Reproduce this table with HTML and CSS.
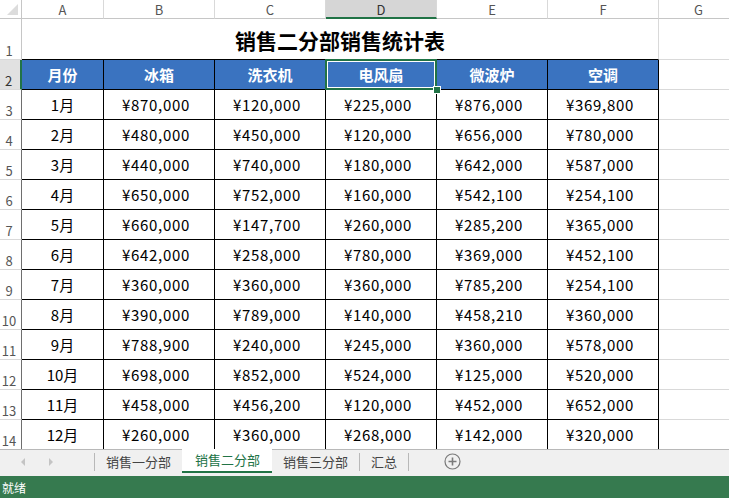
FILE: index.html
```html
<!DOCTYPE html>
<html lang="zh-CN">
<head>
<meta charset="utf-8">
<title>销售二分部销售统计表</title>
<link rel="stylesheet" href="styles.css">
</head>
<body>
<div class="app">
  <div class="sheet">
    <div class="grid">
      <div class="corner"><span class="tri"></span></div>
      <div class="ch">A</div><div class="ch">B</div><div class="ch">C</div><div class="ch sel">D</div><div class="ch">E</div><div class="ch">F</div><div class="ch">G</div>

      <div class="rh">1</div><div class="title">销售二分部销售统计表</div><div class="c"></div>

      <div class="rh edge selr">2</div><div class="c d hd">月份</div><div class="c d hd">冰箱</div><div class="c d hd">洗衣机</div><div class="c d hd active">电风扇</div><div class="c d hd">微波炉</div><div class="c d hd">空调</div><div class="c"></div>

      <div class="rh edge">3</div><div class="c d">1月</div><div class="c d n">¥870,000</div><div class="c d n">¥120,000</div><div class="c d n">¥225,000</div><div class="c d n">¥876,000</div><div class="c d n">¥369,800</div><div class="c"></div>
      <div class="rh edge">4</div><div class="c d">2月</div><div class="c d n">¥480,000</div><div class="c d n">¥450,000</div><div class="c d n">¥120,000</div><div class="c d n">¥656,000</div><div class="c d n">¥780,000</div><div class="c"></div>
      <div class="rh edge">5</div><div class="c d">3月</div><div class="c d n">¥440,000</div><div class="c d n">¥740,000</div><div class="c d n">¥180,000</div><div class="c d n">¥642,000</div><div class="c d n">¥587,000</div><div class="c"></div>
      <div class="rh edge">6</div><div class="c d">4月</div><div class="c d n">¥650,000</div><div class="c d n">¥752,000</div><div class="c d n">¥160,000</div><div class="c d n">¥542,100</div><div class="c d n">¥254,100</div><div class="c"></div>
      <div class="rh edge">7</div><div class="c d">5月</div><div class="c d n">¥660,000</div><div class="c d n">¥147,700</div><div class="c d n">¥260,000</div><div class="c d n">¥285,200</div><div class="c d n">¥365,000</div><div class="c"></div>
      <div class="rh edge">8</div><div class="c d">6月</div><div class="c d n">¥642,000</div><div class="c d n">¥258,000</div><div class="c d n">¥780,000</div><div class="c d n">¥369,000</div><div class="c d n">¥452,100</div><div class="c"></div>
      <div class="rh edge">9</div><div class="c d">7月</div><div class="c d n">¥360,000</div><div class="c d n">¥360,000</div><div class="c d n">¥360,000</div><div class="c d n">¥785,200</div><div class="c d n">¥254,100</div><div class="c"></div>
      <div class="rh edge">10</div><div class="c d">8月</div><div class="c d n">¥390,000</div><div class="c d n">¥789,000</div><div class="c d n">¥140,000</div><div class="c d n">¥458,210</div><div class="c d n">¥360,000</div><div class="c"></div>
      <div class="rh edge">11</div><div class="c d">9月</div><div class="c d n">¥788,900</div><div class="c d n">¥240,000</div><div class="c d n">¥245,000</div><div class="c d n">¥360,000</div><div class="c d n">¥578,000</div><div class="c"></div>
      <div class="rh edge">12</div><div class="c d">10月</div><div class="c d n">¥698,000</div><div class="c d n">¥852,000</div><div class="c d n">¥524,000</div><div class="c d n">¥125,000</div><div class="c d n">¥520,000</div><div class="c"></div>
      <div class="rh edge">13</div><div class="c d">11月</div><div class="c d n">¥458,000</div><div class="c d n">¥456,200</div><div class="c d n">¥120,000</div><div class="c d n">¥452,000</div><div class="c d n">¥652,000</div><div class="c"></div>
      <div class="rh edge">14</div><div class="c d">12月</div><div class="c d n">¥260,000</div><div class="c d n">¥360,000</div><div class="c d n">¥268,000</div><div class="c d n">¥142,000</div><div class="c d n">¥320,000</div><div class="c"></div>
    </div>
  </div>

  <div class="tabbar">
    <div class="nav">
      <svg width="6" height="8" viewBox="0 0 6 8"><path d="M5 0 L1 4 L5 8 Z" fill="#c4c4c4"/></svg>
      <svg width="6" height="8" viewBox="0 0 6 8"><path d="M1 0 L5 4 L1 8 Z" fill="#c4c4c4"/></svg>
    </div>
    <div class="tabs">
      <div class="tab">销售一分部</div>
      <div class="tab current">销售二分部</div>
      <div class="tab">销售三分部</div>
      <div class="tab">汇总</div>
    </div>
    <div class="add">
      <svg width="17" height="17" viewBox="0 0 17 17"><circle cx="8.5" cy="8.5" r="7.5" fill="none" stroke="#7a7a7a" stroke-width="1.2"/><path d="M8.5 4.5 V12.5 M4.5 8.5 H12.5" stroke="#7a7a7a" stroke-width="1.6"/></svg>
    </div>
  </div>

  <div class="status">就绪</div>
</div>
</body>
</html>
```

FILE: styles.css
```css
* { box-sizing: border-box; }
html, body { margin: 0; padding: 0; }
body {
  width: 729px;
  height: 498px;
  overflow: hidden;
  font-family: "Noto Sans CJK SC", "Noto Sans", sans-serif;
  background: #fff;
}
.app { display: flex; flex-direction: column; height: 498px; }

.sheet { height: 449px; overflow: hidden; flex: none; }
.grid {
  display: grid;
  grid-template-columns: 22px 82px 111px 111px 111px 111px 111px 80px;
  grid-template-rows: 19px 41px repeat(13, 30px);
}

.corner {
  position: relative;
  background: #fff;
  border-right: 1px solid #c6c6c6;
  border-bottom: 1px solid #c6c6c6;
}
.tri {
  position: absolute;
  right: 3px;
  bottom: 3px;
  width: 0; height: 0;
  border-left: 11px solid transparent;
  border-bottom: 11px solid #dcdcdc;
}

.ch {
  display: flex;
  align-items: center;
  justify-content: center;
  font-size: 13px;
  color: #555;
  background: #fff;
  border-right: 1px solid #d9d9d9;
  border-bottom: 1px solid #c6c6c6;
  padding-top: 1px;
}
.ch.sel {
  background: #d6d6d6;
  border-bottom: 2px solid #217346;
  color: #333;
}

.rh {
  display: flex;
  align-items: flex-end;
  justify-content: center;
  padding: 0 3px 2px 0;
  font-size: 13px;
  line-height: 1;
  color: #555;
  background: #fff;
  border-right: 1px solid #c6c6c6;
  border-bottom: 1px solid #d9d9d9;
}
.rh.edge { border-right-color: #6e6e6e; }
.rh.selr {
  background: #e1e1e1;
  border-right: 2px solid #217346;
  color: #333;
}

.title {
  grid-column: span 6;
  display: flex;
  align-items: center;
  justify-content: center;
  font-size: 21px;
  font-weight: bold;
  color: #000;
  border-right: 1px solid #d9d9d9;
  border-bottom: 1px solid #000;
  padding-top: 1px;
}

.c {
  border-right: 1px solid #d9d9d9;
  border-bottom: 1px solid #d9d9d9;
}
.c.d {
  display: flex;
  align-items: center;
  justify-content: center;
  font-size: 15px;
  color: #000;
  border-right-color: #000;
  border-bottom-color: #000;
}
.c.n { letter-spacing: 0.7px; padding-right: 6px; }
.c.hd {
  background: #3a73c0;
  color: #fff;
  font-weight: bold;
  font-size: 15px;
}
.active { position: relative; }
.active::before {
  content: "";
  position: absolute;
  top: -1px; left: -1px; right: -1px; bottom: -1px;
  border: 2px solid #217346;
  box-shadow: inset 0 0 0 1px #fff;
}
.active::after {
  content: "";
  position: absolute;
  right: -4px;
  bottom: -4px;
  width: 6px;
  height: 6px;
  background: #217346;
  outline: 1px solid #fff;
}

.tabbar {
  height: 27px;
  flex: none;
  display: flex;
  align-items: stretch;
  background: #f0f0f0;
  border-top: 1px solid #b8b8b8;
}
.nav {
  width: 95px;
  display: flex;
  align-items: center;
  gap: 22px;
  padding-left: 20px;
  border-right: 1px solid #b8b8b8;
  margin: 3px 0 5px;
}
.tabs { display: flex; }
.tab {
  display: flex;
  align-items: center;
  padding: 0 11px 2px;
  font-size: 13px;
  color: #444;
  border-right: 1px solid #b8b8b8;
  margin: 3px 0 5px;
}
.tab.current {
  background: #fff;
  color: #217346;
  margin: -1px 0 3px;
  padding: 1px 12px 2px 13px;
  border-bottom: 2px solid #217346;
  border-right: none;
}
.tab:nth-child(1) { border-right: none; }
.add {
  display: flex;
  align-items: center;
  padding-left: 35px;
  padding-bottom: 3px;
}

.status {
  flex: 1;
  background: #367a4f;
  color: #fff;
  font-size: 12px;
  display: flex;
  align-items: center;
  padding-left: 2px;
}
```
